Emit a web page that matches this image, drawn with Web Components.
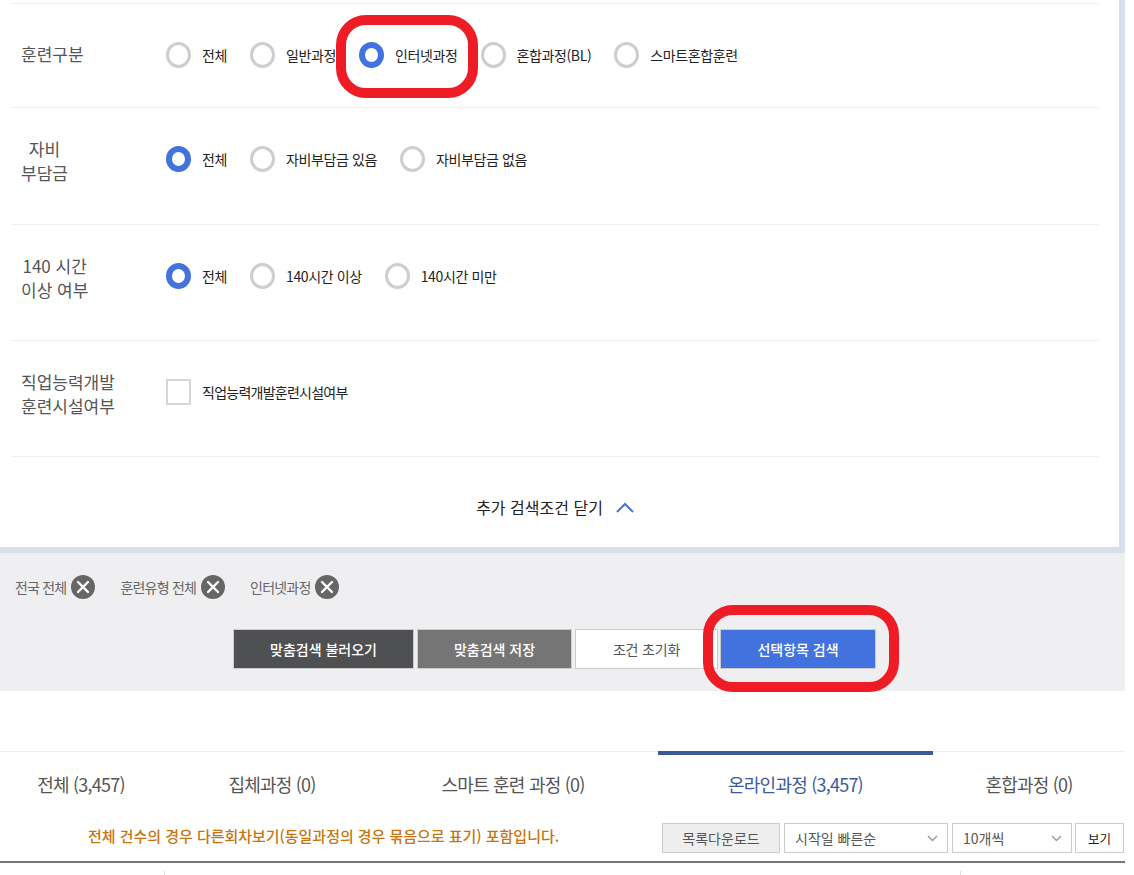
<!DOCTYPE html>
<html lang="ko">
<head>
<meta charset="utf-8">
<title>훈련과정 검색</title>
<style>
  html, body { margin: 0; height: 875px; overflow: hidden; background: #fff; }
  body { font-family: "Noto Sans CJK KR", "Noto Sans", sans-serif; color: #222; }
</style>
</head>
<body>
<search-page>
  <filter-panel slot="panel">
    <filter-row top="39" height="104">
      <span slot="label">훈련구분</span>
      <choice-item type="radio">전체</choice-item>
      <choice-item type="radio">일반과정</choice-item>
      <choice-item type="radio" checked>인터넷과정</choice-item>
      <choice-item type="radio">혼합과정(BL)</choice-item>
      <choice-item type="radio">스마트혼합훈련</choice-item>
    </filter-row>
    <filter-row top="30" height="117">
      <span slot="label">자비<br>부담금</span>
      <choice-item type="radio" checked>전체</choice-item>
      <choice-item type="radio">자비부담금 있음</choice-item>
      <choice-item type="radio">자비부담금 없음</choice-item>
    </filter-row>
    <filter-row top="30" height="116">
      <span slot="label">140 시간<br>이상 여부</span>
      <choice-item type="radio" checked>전체</choice-item>
      <choice-item type="radio">140시간 이상</choice-item>
      <choice-item type="radio">140시간 미만</choice-item>
    </filter-row>
    <filter-row top="30" height="116">
      <span slot="label">직업능력개발<br>훈련시설여부</span>
      <choice-item type="check" style="letter-spacing:-0.75px">직업능력개발훈련시설여부</choice-item>
    </filter-row>
  </filter-panel>
  <selection-bar slot="selection">
    <selected-tag>전국 전체</selected-tag>
    <selected-tag>훈련유형 전체</selected-tag>
    <selected-tag>인터넷과정</selected-tag>
    <action-button slot="actions" kind="dark" width="181">맞춤검색 불러오기</action-button>
    <action-button slot="actions" kind="gray" width="155">맞춤검색 저장</action-button>
    <action-button slot="actions" kind="plain" width="143">조건 초기화</action-button>
    <action-button slot="actions" kind="blue" width="156" style="margin-left:-1px">선택항목 검색</action-button>
  </selection-bar>
  <result-tabs slot="tabs">
    <tab-item width="176" shift="14">전체 (3,457)</tab-item>
    <tab-item width="192">집체과정 (0)</tab-item>
    <tab-item width="290">스마트 훈련 과정 (0)</tab-item>
    <tab-item width="275" active>온라인과정 (3,457)</tab-item>
    <tab-item width="192">혼합과정 (0)</tab-item>
  </result-tabs>
  <list-toolbar slot="toolbar">
    <span slot="note">전체 건수의 경우 다른회차보기(동일과정의 경우 묶음으로 표기) 포함입니다.</span>
    <tool-box width="118" fill>목록다운로드</tool-box>
    <tool-box width="164" arrow>시작일 빠른순</tool-box>
    <tool-box width="120" arrow>10개씩</tool-box>
    <tool-box width="49" center style="margin-left:-1px">보기</tool-box>
  </list-toolbar>
</search-page>

<script>
const baseStyle = `
  :host, *, *::before, *::after { box-sizing: border-box; }
`;

class SearchPage extends HTMLElement {
  constructor() {
    super();
    this.attachShadow({ mode: "open" });
    this.shadowRoot.innerHTML = `
      <style>
        ${baseStyle}
        :host { display: block; position: relative; width: 1125px; height: 875px; overflow: hidden; }
        .mark {
          position: absolute;
          border: 10px solid #ee1c25;
          border-radius: 30px;
        }
        .one { left: 336px; top: 15px; width: 142px; height: 83px; }
        .two { left: 703px; top: 605px; width: 196px; height: 87px; }
        .foot { display: flex; height: 12px; }
        .foot i { width: 1px; height: 4px; margin-top: 8px; background: #ddd; }
        .foot i:first-child { margin-left: 164px; }
        .foot i:last-child { margin-left: 795px; }
      </style>
      <slot name="panel"></slot>
      <slot name="selection"></slot>
      <slot name="tabs"></slot>
      <slot name="toolbar"></slot>
      <div class="foot"><i></i><i></i></div>
      <div class="mark one"></div>
      <div class="mark two"></div>
    `;
  }
}

class FilterPanel extends HTMLElement {
  constructor() {
    super();
    this.attachShadow({ mode: "open" });
    this.shadowRoot.innerHTML = `
      <style>
        ${baseStyle}
        :host {
          display: block;
          height: 553px;
          padding: 3px 26px 0 11px;
          background: #fff;
          position: relative;
        }
        .edge { position: absolute; background: #d8dfeb; }
        .right { right: 0; top: 0; width: 6px; height: 553px; }
        .bottom { left: 0; right: 0; bottom: 0; height: 6px; }
        .close {
          display: flex;
          justify-content: center;
          align-items: center;
          gap: 13px;
          border-top: 1px solid #f0f0f0;
          padding-top: 38px;
          font-size: 16px;
          color: #222;
          line-height: 24px;
        }
        svg { display: block; }
      </style>
      <slot></slot>
      <div class="close">추가 검색조건 닫기
        <svg width="18" height="11" viewBox="0 0 18 11"><path d="M1 10 L9 2 L17 10" fill="none" stroke="#4272dd" stroke-width="2"/></svg>
      </div>
      <div class="edge right"></div>
      <div class="edge bottom"></div>
    `;
  }
}

class FilterRow extends HTMLElement {
  constructor() {
    super();
    this.attachShadow({ mode: "open" });
    const top = this.getAttribute("top") || 30;
    const height = this.getAttribute("height") || 116;
    this.shadowRoot.innerHTML = `
      <style>
        ${baseStyle}
        :host {
          display: flex;
          align-items: flex-start;
          height: ${height}px;
          border-top: 1px solid #f0f0f0;
          padding-left: 10px;
        }
        .label {
          width: 145px;
          padding-top: ${top - 1}px;
          flex: none;
        }
        .label div {
          display: inline-block;
          text-align: center;
          font-size: 17px;
          line-height: 24px;
          color: #555;
        }
        .items { display: flex; gap: 23px; padding-top: 38px; }
      </style>
      <div class="label"><div><slot name="label"></slot></div></div>
      <div class="items"><slot></slot></div>
    `;
  }
}

class ChoiceItem extends HTMLElement {
  constructor() {
    super();
    this.attachShadow({ mode: "open" });
    const isCheck = this.getAttribute("type") === "check";
    const on = this.hasAttribute("checked");
    this.shadowRoot.innerHTML = `
      <style>
        ${baseStyle}
        :host {
          display: flex;
          align-items: center;
          gap: 11px;
          height: 26px;
          font-size: 14px;
          letter-spacing: -0.38px;
          color: #222;
          white-space: nowrap;
        }
        .box {
          width: 25px;
          height: 26px;
          background: #fff;
          border: 3px solid #cdcdd2;
          border-radius: 50%;
        }
        .box.on { border: 6.5px solid #4272dd; }
        .box.check { border: 2px solid #d6d6d6; border-radius: 0; }
      </style>
      <div class="box ${isCheck ? "check" : ""} ${on ? "on" : ""}"></div>
      <span><slot></slot></span>
    `;
  }
}

class SelectionBar extends HTMLElement {
  constructor() {
    super();
    this.attachShadow({ mode: "open" });
    this.shadowRoot.innerHTML = `
      <style>
        ${baseStyle}
        :host { display: block; height: 138px; background: #efeff1; }
        .tags { display: flex; gap: 25px; padding: 22px 0 0 15px; height: 76px; }
        .actions { display: flex; gap: 3px; padding-left: 233px; }
      </style>
      <div class="tags"><slot></slot></div>
      <div class="actions"><slot name="actions"></slot></div>
    `;
  }
}

class SelectedTag extends HTMLElement {
  constructor() {
    super();
    this.attachShadow({ mode: "open" });
    this.shadowRoot.innerHTML = `
      <style>
        ${baseStyle}
        :host {
          display: flex;
          align-items: center;
          gap: 5px;
          height: 24px;
          font-size: 14px;
          letter-spacing: -0.8px;
          color: #666;
          white-space: nowrap;
        }
        svg { display: block; }
      </style>
      <span><slot></slot></span>
      <svg width="24" height="24" viewBox="0 0 24 24">
        <circle cx="12" cy="12" r="12" fill="#666"/>
        <path d="M7 7 L17 17 M17 7 L7 17" stroke="#fff" stroke-width="2.4" stroke-linecap="round"/>
      </svg>
    `;
  }
}

const BUTTON_KINDS = {
  dark: "background:#4f5052;color:#fff;font-weight:500;",
  gray: "background:#757575;color:#fff;font-weight:500;",
  plain: "background:#fff;color:#555;letter-spacing:-0.2px;",
  blue: "background:#4272dd;color:#fff;font-weight:500;",
};

class ActionButton extends HTMLElement {
  constructor() {
    super();
    this.attachShadow({ mode: "open" });
    const kind = BUTTON_KINDS[this.getAttribute("kind")] || BUTTON_KINDS.plain;
    this.shadowRoot.innerHTML = `
      <style>
        ${baseStyle}
        :host {
          display: flex;
          align-items: center;
          justify-content: center;
          width: ${this.getAttribute("width")}px;
          height: 40px;
          border: 1px solid #ccc;
          font-size: 14px;
          ${kind}
          white-space: nowrap;
        }
      </style>
      <slot></slot>
    `;
  }
}

class ResultTabs extends HTMLElement {
  constructor() {
    super();
    this.attachShadow({ mode: "open" });
    this.shadowRoot.innerHTML = `
      <style>
        ${baseStyle}
        :host {
          display: flex;
          margin-top: 60px;
          height: 70px;
          border-top: 1px solid #eee;
        }
      </style>
      <slot></slot>
    `;
  }
}

class TabItem extends HTMLElement {
  constructor() {
    super();
    this.attachShadow({ mode: "open" });
    const active = this.hasAttribute("active");
    const shift = this.getAttribute("shift") || 0;
    this.shadowRoot.innerHTML = `
      <style>
        ${baseStyle}
        :host {
          display: block;
          width: ${this.getAttribute("width")}px;
          height: ${active ? 70 : 69}px;
          margin-top: ${active ? "-1px" : "0"};
          border-top: ${active ? "4px solid #3c5a9a" : "0"};
          padding: ${active ? 16 : 19}px ${shift}px 0 0;
          text-align: center;
          font-size: 18px;
          line-height: 26px;
          letter-spacing: -0.78px;
          color: ${active ? "#3c5a9a" : "#555"};
          white-space: nowrap;
        }
      </style>
      <slot></slot>
    `;
  }
}

class ListToolbar extends HTMLElement {
  constructor() {
    super();
    this.attachShadow({ mode: "open" });
    this.shadowRoot.innerHTML = `
      <style>
        ${baseStyle}
        :host {
          display: flex;
          height: 42px;
          padding: 2px 1px 0 88px;
          border-bottom: 2px solid #777;
          align-items: flex-start;
        }
        .note {
          flex: 1;
          font-size: 15px;
          font-weight: 500;
          line-height: 26px;
          letter-spacing: -0.03px;
          color: #c8750e;
          white-space: nowrap;
        }
        .tools { display: flex; gap: 4px; }
      </style>
      <div class="note"><slot name="note"></slot></div>
      <div class="tools"><slot></slot></div>
    `;
  }
}

class ToolBox extends HTMLElement {
  constructor() {
    super();
    this.attachShadow({ mode: "open" });
    const arrow = this.hasAttribute("arrow");
    const fill = this.hasAttribute("fill");
    const center = fill || this.hasAttribute("center");
    this.shadowRoot.innerHTML = `
      <style>
        ${baseStyle}
        :host {
          display: flex;
          align-items: center;
          justify-content: ${center ? "center" : "space-between"};
          width: ${this.getAttribute("width")}px;
          height: 30px;
          padding: 0 ${center ? 0 : 9}px 0 ${center ? 0 : 10}px;
          border: 1px solid #ccc;
          background: ${fill ? "#eee" : "#fff"};
          font-size: ${center && !fill ? 12.5 : 14}px;
          color: ${center && !fill ? "#222" : "#555"};
          white-space: nowrap;
        }
        svg { display: block; }
      </style>
      <span><slot></slot></span>
      ${arrow ? `<svg width="11" height="7" viewBox="0 0 11 7"><path d="M1 1 L5.5 5.5 L10 1" fill="none" stroke="#999" stroke-width="1.4"/></svg>` : ""}
    `;
  }
}

customElements.define("search-page", SearchPage);
customElements.define("filter-panel", FilterPanel);
customElements.define("filter-row", FilterRow);
customElements.define("choice-item", ChoiceItem);
customElements.define("selection-bar", SelectionBar);
customElements.define("selected-tag", SelectedTag);
customElements.define("action-button", ActionButton);
customElements.define("result-tabs", ResultTabs);
customElements.define("tab-item", TabItem);
customElements.define("list-toolbar", ListToolbar);
customElements.define("tool-box", ToolBox);
</script>
</body>
</html>
